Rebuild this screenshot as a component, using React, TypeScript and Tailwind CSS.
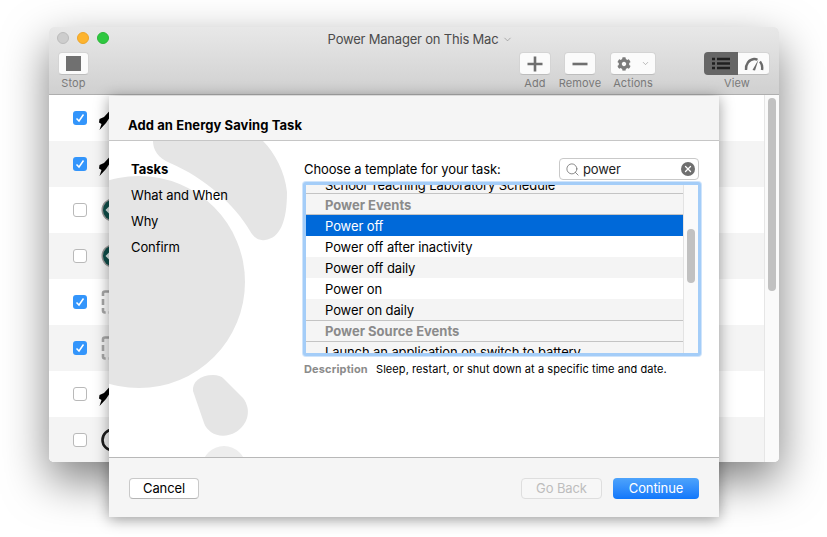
import React from 'react';
import { FaCog } from 'react-icons/fa';
import { ChevronDown, Search, X } from 'lucide-react';

// Buttons in the main window toolbar
const ToolButton = ({ className, children }: { className: string; children: React.ReactNode }) => (
  <div className={`h-[23px] flex items-center justify-center rounded-[4px] bg-[#fbfbfb] border border-[#d4d4d4] border-b-[#bdbdbd] ${className}`}>
    {children}
  </div>
);

// width comes from the button, a longer label just hangs over both sides
const ToolItem = ({ label, className, children }: { label: string; className: string; children: React.ReactNode }) => (
  <div className={`flex flex-col items-center ${className}`}>
    {children}
    <span className="mt-[2px] text-[11px] leading-[13px] tracking-[0.1px] text-[#7a7a7a] whitespace-nowrap">{label}</span>
  </div>
);

const PlugIcon = () => (
  <svg width="24" height="24" viewBox="0 0 24 24" className="text-black overflow-visible">
    <path d="M-1.5 24 L0.5 18 L-2 16.5 L-1.5 13 L3 11 L9 4.5 L9 11 L5 17 Z" fill="currentColor" />
  </svg>
);

const GreenIcon = () => (
  <svg width="24" height="24" viewBox="0 0 24 24">
    <circle cx="12" cy="12" r="11.5" fill="#9a9a9a" />
    <circle cx="12.5" cy="12" r="10.5" fill="#0f4f4a" />
    <path d="M4.5 12 L8 8.5 V15.5 Z" fill="#dfe9e7" />
  </svg>
);

const DashedIcon = () => (
  <svg width="24" height="24" viewBox="0 0 24 24">
    <rect x="2" y="1.5" width="20" height="21" rx="2" fill="none" stroke="#a8a8a8" strokeWidth="2.6" strokeDasharray="6 3" />
  </svg>
);

const RingIcon = () => (
  <svg width="24" height="24" viewBox="0 0 24 24">
    <circle cx="12" cy="12" r="10.5" fill="none" stroke="#1d1d1d" strokeWidth="2.6" />
  </svg>
);

const Checkbox = ({ checked }: { checked: boolean }) =>
  checked ? (
    <span className="w-[14px] h-[14px] rounded-[3px] bg-[#3395fb] flex items-center justify-center">
      <svg width="10" height="10" viewBox="0 0 10 10">
        <path d="M1.5 5.5 L4 8 L8.5 1.5" fill="none" stroke="white" strokeWidth="1.5" />
      </svg>
    </span>
  ) : (
    <span className="w-[14px] h-[14px] rounded-[3px] bg-white border border-[#b9b9b9]" />
  );

const rows = [
  { checked: true, icon: <PlugIcon /> },
  { checked: true, icon: <PlugIcon /> },
  { checked: false, icon: <GreenIcon /> },
  { checked: false, icon: <GreenIcon /> },
  { checked: true, icon: <DashedIcon /> },
  { checked: true, icon: <DashedIcon /> },
  { checked: false, icon: <PlugIcon /> },
  { checked: false, icon: <RingIcon /> },
];

const ListRow = ({ label, className }: { label: string; className: string }) => (
  <div className={`h-[21px] pl-[19px] text-[13px] leading-[22px] whitespace-nowrap ${className}`}>{label}</div>
);

const GroupRow = ({ label, className }: { label: string; className: string }) => (
  <div className={`h-[21px] pl-[19px] text-[13px] font-bold tracking-normal text-[#8b8b8b] bg-[#f5f5f5] border-b border-[#c4c4c4] ${className}`}>
    {label}
  </div>
);

export default function App() {
  return (
    <div className="relative w-[827px] h-[537px] overflow-hidden bg-white pl-[49px] pt-[27px] text-black tracking-[-0.1px] font-['Inter',sans-serif]">
      {/* main window */}
      <div className="relative w-[730px] h-[435px] rounded-[5px] flex flex-col shadow-[0_18px_45px_rgba(0,0,0,0.5)]">
        <div className="h-[68px] shrink-0 rounded-t-[5px] bg-gradient-to-b from-[#e8e8e8] to-[#d0d0d0] border-b border-[#aeaeae] flex flex-col">
          <div className="relative h-[25px] shrink-0 flex items-center justify-center pl-[13px] text-[13px] tracking-[-0.2px] text-[#4b4b4b]">
            <div className="absolute left-[8px] top-[5px] flex gap-[8px]">
              <span className="w-[12px] h-[12px] rounded-full bg-[#cdcdcd] border border-[#bcbcbc]" />
              <span className="w-[12px] h-[12px] rounded-full bg-[#fdb42f] border border-[#eda52a]" />
              <span className="w-[12px] h-[12px] rounded-full bg-[#2fc840] border border-[#2ab638]" />
            </div>
            <span>Power Manager on This Mac</span>
            <ChevronDown size={11} strokeWidth={1.5} className="ml-[4px] text-[#8f8f8f]" />
          </div>
          <div className="flex items-start pl-[9px] pr-[9px]">
            <ToolItem label="Stop" className="w-[31px]">
              <ToolButton className="w-[31px] shrink-0">
                <span className="w-[15px] h-[15px] bg-[#707070]" />
              </ToolButton>
            </ToolItem>
            <div className="ml-auto flex items-start">
              <ToolItem label="Add" className="w-[32px]">
                <ToolButton className="w-[32px] shrink-0">
                  <svg width="16" height="16" viewBox="0 0 16 16"><path d="M8 0.5 V15.5 M0.5 8 H15.5" stroke="#6f6f6f" strokeWidth="2.6" /></svg>
                </ToolButton>
              </ToolItem>
              <ToolItem label="Remove" className="w-[32px] ml-[13px]">
                <ToolButton className="w-[32px] shrink-0">
                  <svg width="16" height="16" viewBox="0 0 16 16"><path d="M0.5 8 H15.5" stroke="#6f6f6f" strokeWidth="2.6" /></svg>
                </ToolButton>
              </ToolItem>
              <ToolItem label="Actions" className="w-[46px] ml-[14px]">
                <ToolButton className="w-[46px] shrink-0 justify-start pl-[6px]">
                  <FaCog size={14} className="text-[#7b7b7b]" />
                  <ChevronDown size={9} strokeWidth={1.5} className="ml-[10px] text-[#8a8a8a]" />
                </ToolButton>
              </ToolItem>
              <ToolItem label="View" className="w-[66px] ml-[48px]">
                <div className="flex h-[23px] w-[66px]">
                  <div className="w-[34px] flex items-center justify-center rounded-l-[4px] bg-[#666666]">
                    <svg width="18" height="13" viewBox="0 0 18 13">
                      <path d="M0 2 H3 M5 2 H18 M0 6.5 H3 M5 6.5 H18 M0 11 H3 M5 11 H18" stroke="#1f1f1f" strokeWidth="2.4" />
                    </svg>
                  </div>
                  <div className="flex-1 flex items-center justify-center rounded-r-[4px] bg-[#fbfbfb] border border-l-0 border-[#d4d4d4] border-b-[#bdbdbd]">
                    <svg width="20" height="14" viewBox="0 0 20 14" fill="none">
                      <path d="M2 13 C1.5 7 5 2.5 10 2 C11.5 1.9 12.5 2.2 13.5 2.7" stroke="#6a6a6a" strokeWidth="2.4" />
                      <path d="M16 4.5 C18 7 18.6 10 18 13" stroke="#6a6a6a" strokeWidth="2.4" />
                      <path d="M8.5 13 L14.5 2.5 L11 13.5 Z" fill="#6a6a6a" />
                    </svg>
                  </div>
                </div>
              </ToolItem>
            </div>
          </div>
        </div>

        <div className="relative flex-1 min-h-0 rounded-b-[5px] overflow-hidden bg-white">
          {rows.map((row, i) => (
            <div
              key={i}
              className={`h-[46px] flex items-center pl-[24px] gap-[12px] ${i % 2 === 1 ? 'bg-[#f4f4f4]' : 'bg-white'}`}
            >
              <Checkbox checked={row.checked} />
              <span className="ml-[2px] flex">{row.icon}</span>
            </div>
          ))}
          <div className="absolute right-0 top-0 bottom-0 w-[15px] bg-[#fafafa] border-l border-[#e6e6e6]">
            <div className="absolute left-[3px] top-[3px] w-[8px] h-[193px] rounded-full bg-[#c1c1c1]" />
          </div>
        </div>

        {/* sheet */}
        <div className="absolute left-[60px] top-[69px] w-[610px] h-[421px] flex flex-col bg-white shadow-[0_2px_14px_rgba(0,0,0,0.4)]">
          <div className="h-[45px] shrink-0 bg-[#f5f5f5] border-b border-[#c6c6c6] pl-[19px] pt-[20px] text-[13px] leading-[18px] font-bold tracking-[0.08px]">
            Add an Energy Saving Task
          </div>

          <div className="relative flex-1 min-h-0 flex">
            <svg className="absolute left-0 top-0" width="610" height="316" viewBox="109 141 610 316">
              <circle cx="139" cy="282" r="106" fill="#e5e5e5" />
              <path
                d="M153 141 C153 150 158 158 170 163 C205 178 235 205 250 231 C254 238 259 241 265 240 C280 238 287 222 287 192 C285 172 275 153 263 141 Z"
                fill="#e5e5e5"
              />
              <path
                d="M193 391 C192 382 200 375 213 375 C218 375 221 376 224 379 L243 398 C252 410 248 424 236 432 C222 440 208 434 204 423 Z"
                fill="#e5e5e5"
              />
              <circle cx="224" cy="468" r="22" fill="#ededed" />
            </svg>

            <div className="relative w-[195px] shrink-0 pl-[22px] pt-[19px] flex flex-col gap-[8px] text-[13px] leading-[18px]">
              <span className="font-bold tracking-normal">Tasks</span>
              <span>What and When</span>
              <span>Why</span>
              <span>Confirm</span>
            </div>

            <div className="relative w-[397px] pt-[17px]">
              <div className="flex items-center justify-between h-[22px] text-[13px] pr-[2px]">
                <span className="pt-[2px]">Choose a template for your task:</span>
                <div className="w-[140px] h-[22px] flex items-center rounded-[4px] bg-white border border-[#c9c9c9] pl-[5px] pr-[3px]">
                  <Search size={15} strokeWidth={1.2} className="text-[#666666]" />
                  <span className="ml-[3px] pt-[2px] text-[#222222]">power</span>
                  <span className="ml-auto w-[14px] h-[14px] rounded-full bg-[#6f6f6f] flex items-center justify-center">
                    <X size={10} strokeWidth={3} className="text-white" />
                  </span>
                </div>
              </div>

              {/* template list, scrolled so the first and last rows are cut */}
              <div className="-ml-[1px] mt-[2px] w-[398px] h-[174px] rounded-[3px] border-[3px] border-[#a4cdf8] shadow-[0_0_0_1px_#cfe4fb] bg-white flex overflow-hidden">
                <div className="flex-1 min-w-0">
                  <div className="h-[9px] overflow-hidden bg-[#f5f5f5] border-b border-[#c4c4c4] pl-[19px] text-[13px] leading-[12px] whitespace-nowrap">
                    <div className="-mt-[6px]">School Teaching Laboratory Schedule</div>
                  </div>
                  <GroupRow label="Power Events" className="leading-[22px]" />
                  <ListRow label="Power off" className="bg-[#0069d9] text-white" />
                  <ListRow label="Power off after inactivity" className="bg-white" />
                  <ListRow label="Power off daily" className="bg-[#f4f4f4]" />
                  <ListRow label="Power on" className="bg-white" />
                  <ListRow label="Power on daily" className="bg-[#f4f4f4]" />
                  <div className="border-t border-[#c4c4c4]">
                    <GroupRow label="Power Source Events" className="leading-[20px]" />
                  </div>
                  <div className="h-[12px] overflow-hidden pl-[19px] text-[13px] leading-[20px] whitespace-nowrap bg-[#f5f5f5]">
                    Launch an application on switch to battery
                  </div>
                </div>
                <div className="relative w-[15px] shrink-0 bg-[#fafafa] border-l border-[#e3e3e3]">
                  <div className="absolute left-[3px] top-[44px] w-[8px] h-[54px] rounded-full bg-[#c1c1c1]" />
                </div>
              </div>

              <div className="mt-[5px] flex items-baseline text-[11px] leading-[16px] tracking-[0.07px]">
                <span className="w-[72px] font-bold tracking-[0.15px] text-[#8b8b8b]">Description</span>
                <span>Sleep, restart, or shut down at a specific time and date.</span>
              </div>
            </div>
          </div>

          <div className="h-[60px] shrink-0 bg-[#f5f5f5] border-t border-[#b8b8b8] flex items-center pt-[2px] pl-[20px] pr-[20px] text-[13px]">
            <button className="w-[70px] h-[21px] rounded-[4px] bg-white border border-[#c9c9c9] border-b-[#b5b5b5]">Cancel</button>
            <button className="ml-auto w-[81px] h-[21px] rounded-[4px] bg-[#f7f7f7] border border-[#dedede] text-[#bdbdbd]">Go Back</button>
            <button className="ml-[11px] w-[86px] h-[21px] rounded-[4px] bg-gradient-to-b from-[#4da3fb] to-[#0f77fb] text-white">Continue</button>
          </div>
        </div>
      </div>
    </div>
  );
}
